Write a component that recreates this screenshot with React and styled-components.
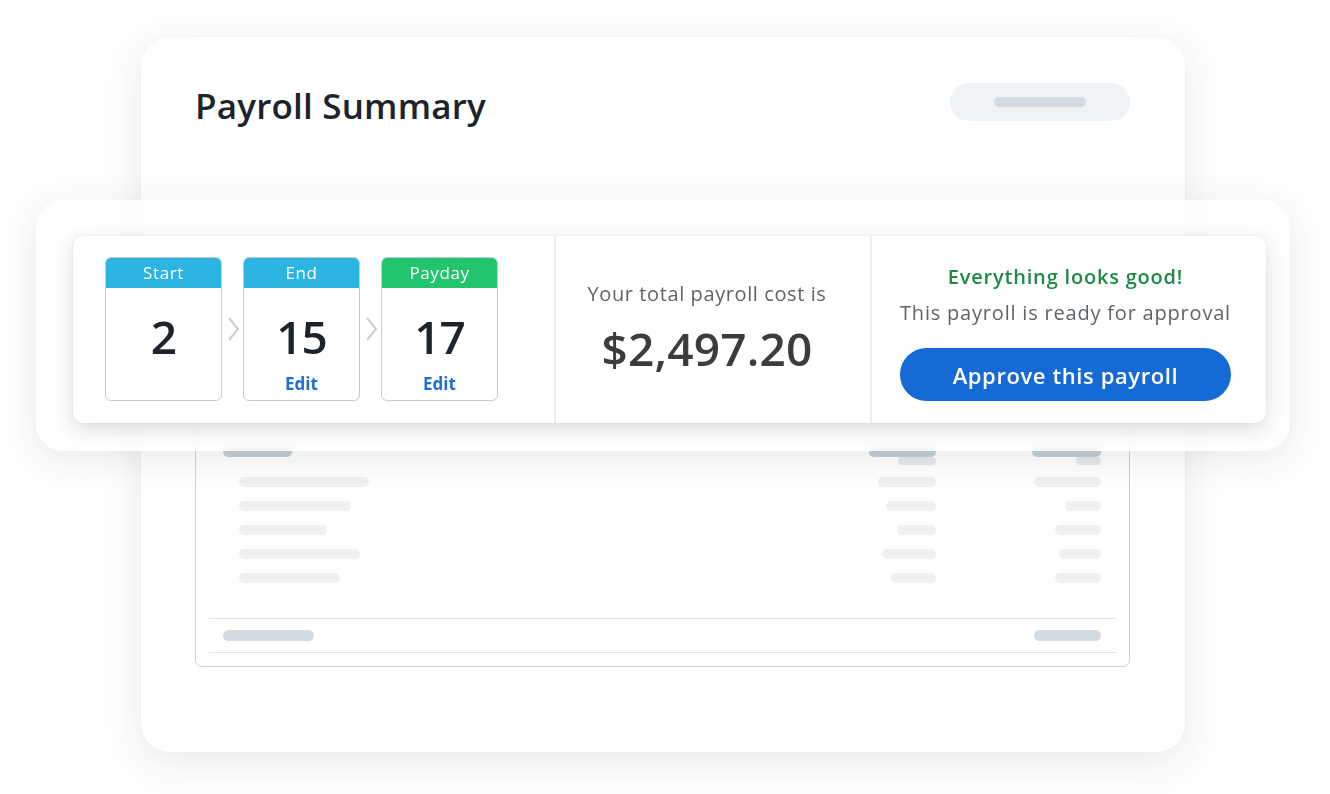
import React from 'react';
import styled, { createGlobalStyle } from 'styled-components';

const GlobalStyle = createGlobalStyle`
	html, body {
		margin: 0;
		padding: 0;
		background: #ffffff;
		font-family: "Open Sans", Lato, sans-serif;
	}
`;

const Page = styled.div`
	width: 1330px;
	height: 794px;
	padding: 37px 0 0 141px;
	box-sizing: border-box;
	overflow: hidden;
	background: #ffffff;
`;

const Card = styled.div`
	position: relative;
	width: 1044px;
	height: 715px;
	box-sizing: border-box;
	padding: 46px 55px 0 54px;
	background: #ffffff;
	border-radius: 28px;
	box-shadow: 0 10px 40px rgba(30, 40, 50, 0.10), 0 0 2px rgba(30, 40, 50, 0.05);
`;

const Header = styled.div`
	display: flex;
	align-items: center;
	justify-content: space-between;
	height: 38px;
`;

const Title = styled.h1`
	margin: 0;
	margin-top: 6px;
	font-size: 35px;
	font-weight: 600;
	color: #1d232a;
	letter-spacing: 0.2px;
`;

const Pill = styled.div`
	display: flex;
	align-items: center;
	justify-content: center;
	width: 180px;
	height: 38px;
	border-radius: 19px;
	background: #f0f3f6;
`;

const Bar = styled.div`
	height: ${p => p.h || 10}px;
	width: ${p => p.w}px;
	border-radius: 6px;
	background: ${p => p.color || '#eef0f2'};
`;

const TableBox = styled.div`
	margin-top: 179px;
	height: 367px;
	box-sizing: border-box;
	padding: 0 13px 0 13px;
	border: 1px solid #c9d1d8;
	border-radius: 7px;
	display: flex;
	flex-direction: column;
`;

const TableTop = styled.div`
	height: 131px;
`;

const HeadBlock = styled.div`
	border-top: 1px solid #dfe5ea;
	padding-top: 14px;
`;

const Row = styled.div`
	display: flex;
	align-items: ${p => p.top ? 'flex-start' : 'center'};
	height: ${p => p.h || 24}px;
	padding: 0 15px 0 ${p => p.indent || 30}px;
`;

const Label = styled.div`
	flex: 1;
	display: flex;
`;

const Col = styled.div`
	width: ${p => p.w}px;
	display: flex;
	flex-direction: column;
	align-items: flex-end;
`;

const Body = styled.div`
	padding-top: 5px;
`;

const FootBlock = styled.div`
	margin-top: 28px;
	border-top: 1px solid #dde5ec;
	border-bottom: 1px solid #dde5ec;
	padding: 11px 0;
`;

const Overlay = styled.div`
	position: absolute;
	left: -105px;
	top: 163px;
	width: 1254px;
	height: 251px;
	box-sizing: border-box;
	padding: 36px 24px 0 37px;
	border-radius: 28px;
	background: rgba(255, 255, 255, 0.72);
	backdrop-filter: blur(4px);
	box-shadow: 0 8px 36px rgba(30, 40, 50, 0.10), inset 0 0 0 1px rgba(255, 255, 255, 0.9);
`;

const Panel = styled.div`
	display: flex;
	height: 187px;
	background: #ffffff;
	border-radius: 10px;
	box-shadow: 0 6px 20px rgba(30, 40, 50, 0.16), 0 0 2px rgba(30, 40, 50, 0.12);
`;

const Section = styled.div`
	width: ${p => p.w}px;
	box-sizing: border-box;
	display: flex;
	flex-direction: column;
	align-items: center;
	padding-top: ${p => p.top}px;
	padding-right: ${p => p.shift || 0}px;
	border-left: 2px solid #eceef1;
`;

const Dates = styled.div`
	width: 481px;
	box-sizing: border-box;
	padding: 21px 0 0 32px;
	display: flex;
	align-items: flex-start;
`;

const DateCard = styled.div`
	width: 117px;
	height: 144px;
	box-sizing: border-box;
	border: 1.5px solid #c3cdd6;
	border-radius: 6px;
	overflow: hidden;
	display: flex;
	flex-direction: column;
`;

const DateHead = styled.div`
	height: 31px;
	flex-shrink: 0;
	display: flex;
	align-items: center;
	justify-content: center;
	background: ${p => p.color};
	color: #ffffff;
	font-size: 17px;
	letter-spacing: 0.6px;
	margin: -1px -1px 0;
`;

const DateNum = styled.div`
	margin-top: 22px;
	text-align: center;
	font-size: 46px;
	font-weight: 600;
	line-height: 52px;
	color: #1d232a;
	letter-spacing: -1px;
`;

const EditLink = styled.a`
	margin-top: 10px;
	text-align: center;
	font-size: 17px;
	font-weight: 700;
	color: #1e6fd0;
`;

const Arrow = styled.div`
	width: 21px;
	height: 144px;
	display: flex;
	align-items: center;
	justify-content: center;
`;

const Caption = styled.div`
	font-size: 20px;
	font-weight: ${p => p.weight || 400};
	color: ${p => p.color || '#5f6469'};
	line-height: 24px;
	letter-spacing: ${p => p.spacing || 0.7}px;
	margin-top: ${p => p.gap || 0}px;
`;

const Amount = styled.div`
	margin-top: 17px;
	font-size: 46px;
	font-weight: 600;
	color: #3a3c3e;
	line-height: 50px;
	letter-spacing: 0.2px;
`;

const ApproveButton = styled.button`
	margin-top: 23px;
	width: 331px;
	height: 53px;
	border: none;
	border-radius: 27px;
	background: #156ad6;
	color: #ffffff;
	font-family: "Open Sans", Lato, sans-serif;
	font-size: 22px;
	font-weight: 600;
	letter-spacing: 0.6px;
`;

const rows = [
	[130, 58, 67],
	[112, 50, 36],
	[88, 39, 46],
	[121, 54, 42],
	[101, 45, 46],
];

const Chevron = () => (
	<svg width="14" height="26" viewBox="0 0 14 26">
		<polyline points="3,2 12,13 3,24" fill="none" stroke="#cbced1" strokeWidth="2" />
	</svg>
);

const dates = [
	{ label: 'Start', day: '2', color: '#2db4e3', edit: false },
	{ label: 'End', day: '15', color: '#2db4e3', edit: true },
	{ label: 'Payday', day: '17', color: '#22c56d', edit: true },
];

const App = () => {
	return (
		<>
			<GlobalStyle />
			<Page>
				<Card>
					<Header>
						<Title>Payroll Summary</Title>
						<Pill><Bar w={92} h={10} color='#d5dbe2' /></Pill>
					</Header>

					<TableBox>
						<TableTop />
						<HeadBlock>
							<Row h={10} indent={14} top>
								<Label><Bar w={69} color='#c6ced5' /></Label>
								<Col w={80}><Bar w={67} color='#c6ced5' /></Col>
								<Col w={165}><Bar w={69} color='#c6ced5' /></Col>
							</Row>
							<Row h={8} indent={14} top>
								<Label />
								<Col w={80}><Bar w={38} h={8} color='#e6e9ec' /></Col>
								<Col w={165}><Bar w={25} h={8} color='#e6e9ec' /></Col>
							</Row>
						</HeadBlock>
						<Body>
							{rows.map((r, i) => (
								<Row key={i}>
									<Label><Bar w={r[0]} /></Label>
									<Col w={80}><Bar w={r[1]} /></Col>
									<Col w={165}><Bar w={r[2]} /></Col>
								</Row>
							))}
						</Body>
						<FootBlock>
							<Row h={11} indent={14}>
								<Label><Bar w={91} h={11} color='#d3dbe2' /></Label>
								<Col w={165}><Bar w={67} h={11} color='#d3dbe2' /></Col>
							</Row>
						</FootBlock>
					</TableBox>

					<Overlay>
						<Panel>
							<Dates>
								{dates.map((d, i) => (
									<React.Fragment key={d.label}>
										{i > 0 && <Arrow><Chevron /></Arrow>}
										<DateCard>
											<DateHead color={d.color}>{d.label}</DateHead>
											<DateNum>{d.day}</DateNum>
											{d.edit && <EditLink>Edit</EditLink>}
										</DateCard>
									</React.Fragment>
								))}
							</Dates>
							<Section w={316} shift={12} top={46}>
								<Caption spacing={0.6}>Your total payroll cost is</Caption>
								<Amount>$2,497.20</Amount>
							</Section>
							<Section w={395} shift={6} top={29}>
								<Caption color='#1e8a45' weight={600} spacing={0.8}>Everything looks good!</Caption>
								<Caption gap={12} spacing={0.8}>This payroll is ready for approval</Caption>
								<ApproveButton>Approve this payroll</ApproveButton>
							</Section>
						</Panel>
					</Overlay>
				</Card>
			</Page>
		</>
	);
};

export default App;
